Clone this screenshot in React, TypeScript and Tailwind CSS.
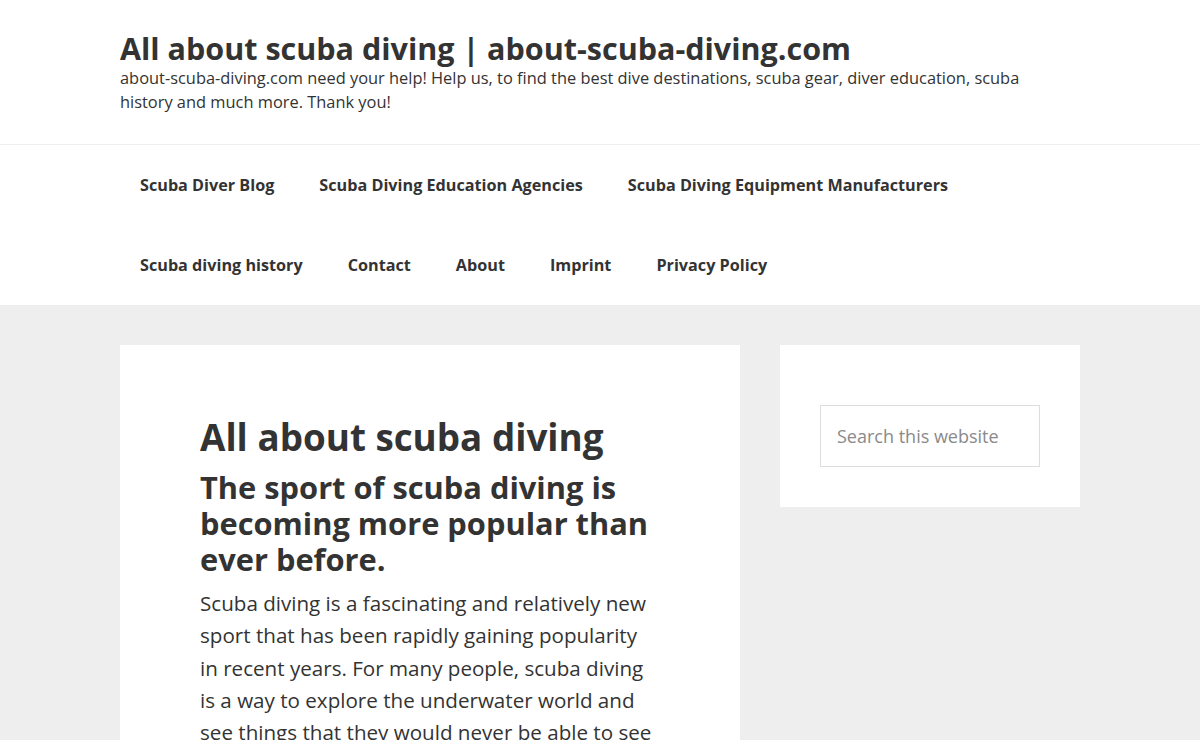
export default function App() {
  const font = { fontFamily: '"Open Sans", "Noto Sans", sans-serif' };
  return (
    <div className="min-h-[740px] bg-[#eeeeee] text-[#333333]" style={font}>
      <header className="bg-white border-b border-[#eeeeee]">
        <div className="mx-auto w-[960px] pt-[30px] pb-[30px]">
          <h1 className="text-[30.5px] font-bold leading-[36px]">All about scuba diving | about-scuba-diving.com</h1>
          <p className="text-[16.4px] leading-[24px] pr-[20px]">
            about-scuba-diving.com need your help! Help us, to find the best dive destinations, scuba gear, diver education, scuba history and much more. Thank you!
          </p>
        </div>
      </header>
      <nav className="bg-white">
        <ul className="mx-auto w-[960px] flex flex-wrap">
          {[
            "Scuba Diver Blog",
            "Scuba Diving Education Agencies",
            "Scuba Diving Equipment Manufacturers",
            "Scuba diving history",
            "Contact",
            "About",
            "Imprint",
            "Privacy Policy",
          ].map((item) => (
            <li key={item} className="px-[20px] mr-[5px] h-[80px] flex items-center text-[16.2px] font-bold whitespace-nowrap">
              {item}
            </li>
          ))}
        </ul>
      </nav>
      <main className="mx-auto w-[960px] flex gap-[40px] pt-[40px]">
        <article className="w-[620px] bg-white px-[80px] pt-[68px] h-[395px] overflow-hidden">
          <h1 className="text-[36.8px] font-bold leading-[48px]">All about scuba diving</h1>
          <h2 className="text-[30.8px] font-bold leading-[36px] mt-[8px]">
            The sport of scuba diving is becoming more popular than ever before.
          </h2>
          <p className="text-[20.6px] leading-[32.3px] mt-[10px]">
            Scuba diving is a fascinating and relatively new sport that has been rapidly gaining popularity in recent years. For many people, scuba diving is a way to explore the underwater world and see things that they would never be able to see otherwise.
          </p>
        </article>
        <aside className="w-[300px] self-start bg-white px-[40px] pt-[60px] pb-[40px]">
          <input
            type="search"
            placeholder="Search this website"
            className="block w-[220px] h-[62px] border border-[#dddddd] px-[16px] text-[18px] placeholder:text-[#8a8a8a] outline-none"
          />
        </aside>
      </main>
    </div>
  );
}
